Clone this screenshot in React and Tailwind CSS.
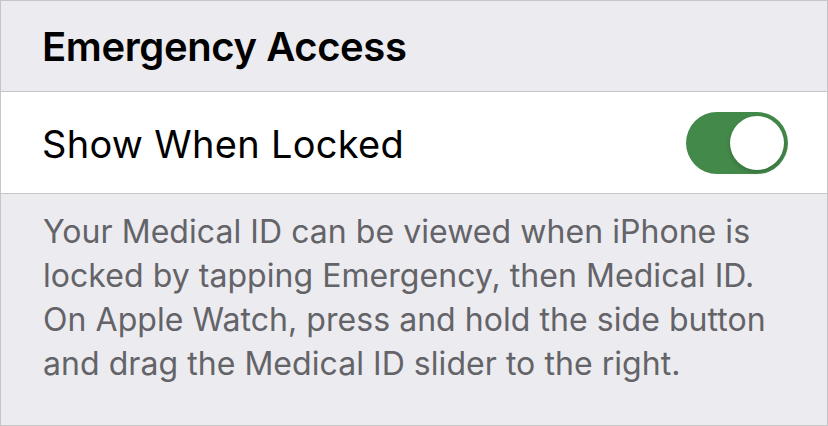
export default function App() {
  return (
    <div
      className="w-[828px] h-[426px] bg-[#ebebf0] border border-[#c6c6c8] flex flex-col"
      style={{ fontFamily: 'Inter, "Liberation Sans", sans-serif' }}
    >
      {/* section header */}
      <div className="h-[91px] flex items-end pl-[41px] pb-[20px] border-b border-[#c6c6c8]">
        <h2 className="text-[40px] leading-[48px] font-semibold text-black tracking-[-0.4px]">
          Emergency Access
        </h2>
      </div>

      {/* toggle row */}
      <div className="h-[102px] bg-white border-b border-[#c6c6c8] flex items-center justify-between pl-[41px] pr-[39px]">
        <span className="text-[38px] text-black tracking-[0.3px] pt-[4px]">Show When Locked</span>
        <button className="w-[102px] h-[62px] rounded-full bg-[#43894a] p-[4px] flex justify-end items-center">
          <span className="block w-[54px] h-[54px] rounded-full bg-white shadow-[0_2px_5px_rgba(0,0,0,0.2)]" />
        </button>
      </div>

      {/* footer note */}
      <p className="pl-[42px] pt-[16px] text-[32px] leading-[44px] text-[#636368] whitespace-nowrap tracking-[0.05px]">
        Your Medical ID can be viewed when iPhone is
        <br />
        locked by tapping Emergency, then Medical ID.
        <br />
        On Apple Watch, press and hold the side button
        <br />
        and drag the Medical ID slider to the right.
      </p>
    </div>
  );
}
